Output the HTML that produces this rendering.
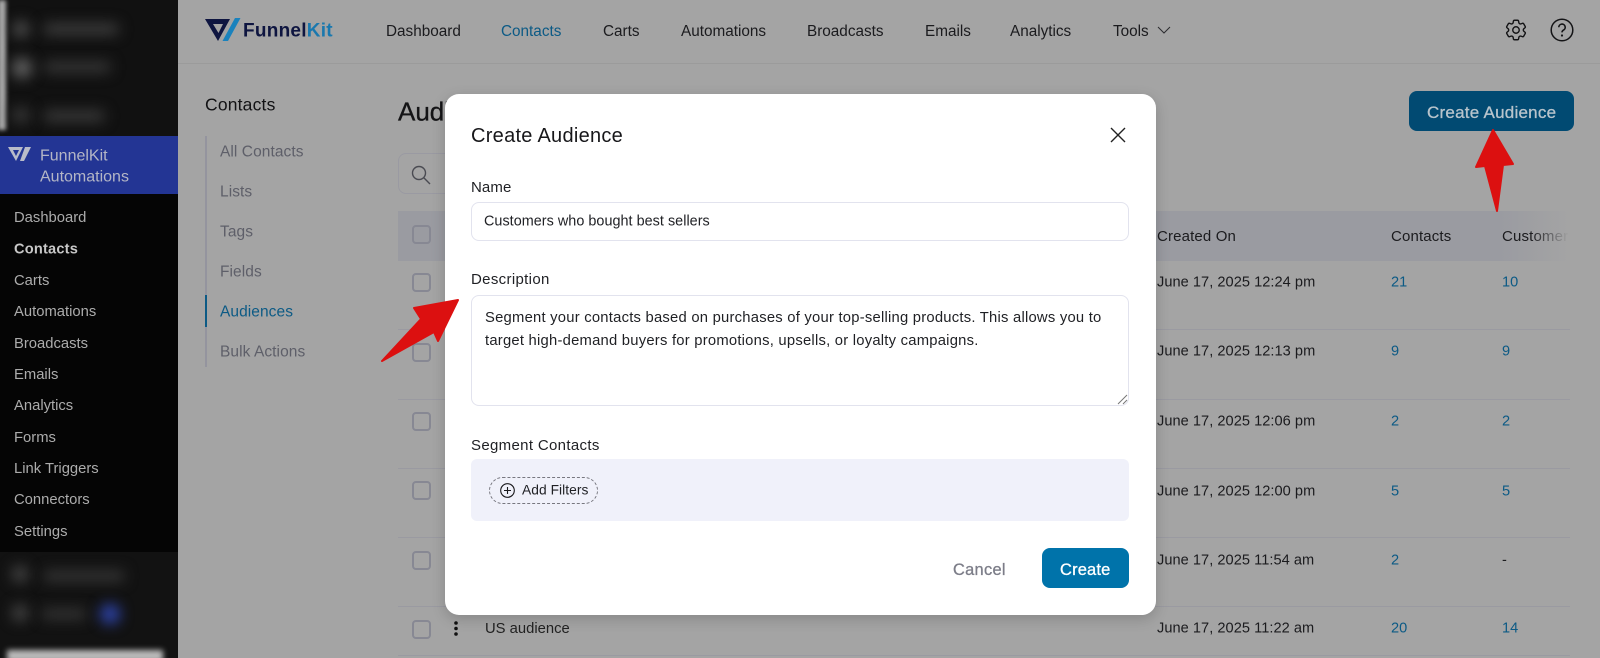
<!DOCTYPE html>
<html><head><meta charset="utf-8"><style>
html,body{margin:0;padding:0;width:1600px;height:658px;overflow:hidden;background:#a4a4a4;font-family:"Liberation Sans",sans-serif}
#p{position:relative;width:1600px;height:658px;overflow:hidden}
.a{position:absolute}
.t{position:absolute;white-space:nowrap;transform:translateY(-50%);line-height:1.2;font-size:15.3px;color:#1b1b1e}
.s{color:#acacac;font-size:14.8px}
.n{color:#5e5f69;font-size:15.5px;letter-spacing:.07px}
.l{color:#0c5a85;font-size:14.6px}
.d{font-size:14.6px;letter-spacing:.04px}
.h{font-size:15px;letter-spacing:.15px}
.m{color:#1f2024;font-size:15px;letter-spacing:.33px}
.w{-webkit-text-stroke:.3px currentColor}
.cb{position:absolute;left:412px;width:15px;height:15px;border:2px solid #878893;border-radius:4px}
.hr{position:absolute;left:398px;width:1172px;height:1px;background:#9a9aa1}
.b{position:absolute;filter:blur(7px)}
</style></head><body><div id="p">

<!-- sidebar -->
<div class="a" style="left:0;top:0;width:178px;height:136px;background:#111;overflow:hidden">
<div class="b" style="left:-2px;top:0;width:8px;height:130px;background:#aaa;filter:blur(2px)"></div>
<div class="b" style="left:13px;top:21px;width:16px;height:16px;border-radius:50%;background:#555"></div>
<div class="b" style="left:44px;top:24px;width:74px;height:10px;background:#444"></div>
<div class="b" style="left:12px;top:58px;width:20px;height:20px;border-radius:50%;background:#666"></div>
<div class="b" style="left:44px;top:62px;width:66px;height:10px;background:#3c3c3c"></div>
<div class="b" style="left:13px;top:108px;width:16px;height:14px;background:#3a3a3a"></div>
<div class="b" style="left:44px;top:111px;width:60px;height:10px;background:#404040"></div>
</div>
<div class="a" style="left:0;top:136px;width:178px;height:58px;background:#233594"></div>
<div class="a" style="left:0;top:194px;width:178px;height:358px;background:#050505"></div>
<div class="a" style="left:0;top:552px;width:178px;height:106px;background:#121212;overflow:hidden">
<div class="b" style="left:12px;top:14px;width:16px;height:16px;border-radius:50%;background:#4a4a4a"></div>
<div class="b" style="left:44px;top:19px;width:80px;height:10px;background:#3a3a3a"></div>
<div class="b" style="left:12px;top:53px;width:16px;height:16px;border-radius:50%;background:#4a4a4a"></div>
<div class="b" style="left:42px;top:57px;width:44px;height:10px;background:#383838"></div>
<div class="b" style="left:100px;top:52px;width:20px;height:20px;border-radius:50%;background:#2f46b0"></div>
<div class="a" style="left:7px;top:98px;width:156px;height:12px;background:#bbb;filter:blur(3px)"></div>
</div>
<svg class="a" style="left:8px;top:147px" width="24" height="15" viewBox="0 0 24 15"><path d="M0 0H15L8 14Z M5 3L8 9L11 3Z" fill="#b9bcc9" fill-rule="evenodd"/><path d="M17 0H23L16 14H12Z" fill="#b9bcc9"/></svg>
<div class="t" style="left:40px;top:156px;color:#b4b6c6;font-size:16px">FunnelKit</div>
<div class="t" style="left:40px;top:177px;color:#b4b6c6;font-size:16px">Automations</div>
<div class="t s" style="left:14px;top:219px">Dashboard</div>
<div class="t" style="left:14px;top:250px;color:#c8c8c8;font-weight:bold;font-size:14.6px;letter-spacing:.2px">Contacts</div>
<div class="t s" style="left:14px;top:282px">Carts</div>
<div class="t s" style="left:14px;top:313px">Automations</div>
<div class="t s" style="left:14px;top:345px">Broadcasts</div>
<div class="t s" style="left:14px;top:376px">Emails</div>
<div class="t s" style="left:14px;top:407px">Analytics</div>
<div class="t s" style="left:14px;top:439px">Forms</div>
<div class="t s" style="left:14px;top:470px">Link Triggers</div>
<div class="t s" style="left:14px;top:501px">Connectors</div>
<div class="t s" style="left:14px;top:533px">Settings</div>

<!-- header -->
<div class="a" style="left:178px;top:63px;width:1422px;height:1px;background:#9b9b9b"></div>
<svg class="a" style="left:205px;top:18px" width="36" height="24" viewBox="0 0 36 24"><path d="M0 1H25L13 23Z M8 6H18L13.500 15Z" fill="#0e1540" fill-rule="evenodd"/><path d="M30 0H35.500L23 23H17.500Z" fill="#1a82bd"/></svg>
<div class="t" style="left:243px;top:32px;font-size:19px;font-weight:bold;letter-spacing:.25px;color:#0e1540">Funnel<span style="color:#1a78ae">Kit</span></div>
<div class="t" style="left:386px;top:32px">Dashboard</div>
<div class="t" style="left:501px;top:32px;color:#0c5a85">Contacts</div>
<div class="t" style="left:603px;top:32px">Carts</div>
<div class="t" style="left:681px;top:32px">Automations</div>
<div class="t" style="left:807px;top:32px">Broadcasts</div>
<div class="t" style="left:925px;top:32px">Emails</div>
<div class="t" style="left:1010px;top:32px">Analytics</div>
<div class="t" style="left:1113px;top:32px">Tools</div>
<svg class="a" style="left:1157px;top:25px" width="14" height="10" viewBox="0 0 14 10"><path d="M1 2L7 8L13 2" fill="none" stroke="#2b2b2e" stroke-width="1"/></svg>
<svg class="a" style="left:1503px;top:17px" width="26" height="26" viewBox="0 0 24 24" fill="none" stroke="#141416" stroke-width="1.300" stroke-linejoin="round"><path d="M9.594 3.94c.09-.542.56-.94 1.11-.94h2.593c.55 0 1.02.398 1.11.94l.213 1.281c.063.374.313.686.645.87.074.04.147.083.22.127.324.196.72.257 1.075.124l1.217-.456a1.125 1.125 0 011.37.49l1.296 2.247a1.125 1.125 0 01-.26 1.431l-1.003.827c-.293.24-.438.613-.431.992a6.759 6.759 0 010 .255c-.007.378.138.75.43.99l1.005.828c.424.35.534.954.26 1.43l-1.298 2.247a1.125 1.125 0 01-1.369.491l-1.217-.456c-.355-.133-.75-.072-1.076.124a6.57 6.57 0 01-.22.128c-.331.183-.581.495-.644.869l-.213 1.28c-.09.543-.56.941-1.11.941h-2.594c-.55 0-1.02-.398-1.11-.94l-.213-1.281c-.062-.374-.312-.686-.644-.87a6.52 6.52 0 01-.22-.127c-.325-.196-.72-.257-1.076-.124l-1.217.456a1.125 1.125 0 01-1.369-.49l-1.297-2.247a1.125 1.125 0 01.26-1.431l1.004-.827c.292-.24.437-.613.43-.992a6.932 6.932 0 010-.255c.007-.378-.138-.75-.43-.99l-1.004-.828a1.125 1.125 0 01-.26-1.43l1.297-2.247a1.125 1.125 0 011.37-.491l1.216.456c.356.133.751.072 1.076-.124.072-.044.146-.087.22-.128.332-.183.582-.495.644-.869l.214-1.281z"/><path d="M15 12a3 3 0 11-6 0 3 3 0 016 0z"/></svg>
<svg class="a" style="left:1550px;top:18px" width="24" height="24" viewBox="0 0 24 24" fill="none"><circle cx="12" cy="12" r="10.800" stroke="#141416" stroke-width="1.500"/><path d="M8.800 9.300a3.200 3.200 0 1 1 4.700 2.800c-1 .6-1.500 1.200-1.500 2.300" stroke="#141416" stroke-width="1.600"/><circle cx="12" cy="17.500" r="1.100" fill="#141416"/></svg>

<!-- secondary nav -->
<div class="t" style="left:205px;top:105px;font-size:17.500px;letter-spacing:.18px;color:#121214">Contacts</div>
<div class="a" style="left:205px;top:136px;width:2px;height:231px;background:#94949e"></div>
<div class="a" style="left:205px;top:295px;width:2px;height:32px;background:#0c5a85"></div>
<div class="t n" style="left:220px;top:153px">All Contacts</div>
<div class="t n" style="left:220px;top:193px">Lists</div>
<div class="t n" style="left:220px;top:233px">Tags</div>
<div class="t n" style="left:220px;top:273px">Fields</div>
<div class="t n" style="left:220px;top:313px;color:#0c5a85">Audiences</div>
<div class="t n" style="left:220px;top:353px">Bulk Actions</div>

<!-- main -->
<div class="t w" style="left:398px;top:112px;font-size:26px;color:#141416">Audiences</div>
<div class="a" style="left:398px;top:153px;width:200px;height:39px;border:1.500px solid #9a9aa2;border-radius:8px"></div>
<svg class="a" style="left:411px;top:165px" width="20" height="20" viewBox="0 0 20 20" fill="none" stroke="#4a4b52" stroke-width="1.400"><circle cx="8" cy="8" r="6.500"/><path d="M12.800 12.800L19 19"/></svg>
<div class="a" style="left:398px;top:211px;width:1172px;height:50px;background:linear-gradient(90deg,#9a9ba1 0,#9a9ba1 94%,#a4a4a4 100%)"></div>
<div class="cb" style="top:225px"></div>
<div class="t h" style="left:1157px;top:237px">Created On</div>
<div class="t h" style="left:1391px;top:237px">Contacts</div>
<div class="a" style="left:1502px;top:227px;width:70px;height:20px;overflow:hidden;-webkit-mask-image:linear-gradient(90deg,#000 40%,transparent 95%)"><div class="t h" style="left:0;top:10px">Customers</div></div>

<div class="hr" style="top:329px"></div><div class="hr" style="top:399px"></div><div class="hr" style="top:468px"></div><div class="hr" style="top:537px"></div><div class="hr" style="top:606px"></div><div class="hr" style="top:655px"></div>
<div class="cb" style="top:273px"></div><div class="cb" style="top:343px"></div><div class="cb" style="top:412px"></div><div class="cb" style="top:481px"></div><div class="cb" style="top:551px"></div><div class="cb" style="top:620px"></div>

<div class="t d" style="left:1157px;top:283px">June 17, 2025 12:24 pm</div>
<div class="t d" style="left:1157px;top:352px">June 17, 2025 12:13 pm</div>
<div class="t d" style="left:1157px;top:422px">June 17, 2025 12:06 pm</div>
<div class="t d" style="left:1157px;top:492px">June 17, 2025 12:00 pm</div>
<div class="t d" style="left:1157px;top:561px">June 17, 2025 11:54 am</div>
<div class="t d" style="left:1157px;top:629px">June 17, 2025 11:22 am</div>
<div class="t l" style="left:1391px;top:283px">21</div><div class="t l" style="left:1502px;top:283px">10</div>
<div class="t l" style="left:1391px;top:352px">9</div><div class="t l" style="left:1502px;top:352px">9</div>
<div class="t l" style="left:1391px;top:422px">2</div><div class="t l" style="left:1502px;top:422px">2</div>
<div class="t l" style="left:1391px;top:492px">5</div><div class="t l" style="left:1502px;top:492px">5</div>
<div class="t l" style="left:1391px;top:561px">2</div><div class="t d" style="left:1502px;top:561px">-</div>
<div class="t l" style="left:1391px;top:629px">20</div><div class="t l" style="left:1502px;top:629px">14</div>
<div class="t" style="left:485px;top:630px;font-size:14.800px;color:#222">US audience</div>
<svg class="a" style="left:453px;top:620px" width="6" height="17" viewBox="0 0 6 17"><circle cx="3" cy="3" r="1.800" fill="#111"/><circle cx="3" cy="8.500" r="1.800" fill="#111"/><circle cx="3" cy="14" r="1.800" fill="#111"/></svg>

<!-- create audience button -->
<div class="a" style="left:1409px;top:91px;width:165px;height:40px;background:#014a72;border-radius:8px"></div>
<div class="t w" style="left:1427px;top:113px;font-size:17px;letter-spacing:.24px;color:#b8c4cc">Create Audience</div>

<!-- modal -->
<div class="a" style="left:445px;top:94px;width:711px;height:521px;background:#fff;border-radius:14px;box-shadow:0 4px 14px rgba(0,0,0,.18)"></div>
<div class="t" style="left:471px;top:136px;font-size:20px;letter-spacing:.28px;color:#17171a">Create Audience</div>
<svg class="a" style="left:1110px;top:127px" width="16" height="16" viewBox="0 0 16 16"><path d="M1 1L15 15M15 1L1 15" stroke="#222" stroke-width="1.400"/></svg>
<div class="t m" style="left:471px;top:188px;letter-spacing:.1px">Name</div>
<div class="a" style="left:471px;top:202px;width:656px;height:37px;border:1px solid #e2e3ee;border-radius:8px"></div>
<div class="t m" style="left:484px;top:222px;font-size:14.400px;letter-spacing:.03px">Customers who bought best sellers</div>
<div class="t m" style="left:471px;top:280px">Description</div>
<div class="a" style="left:471px;top:295px;width:656px;height:109px;border:1px solid #e2e3ee;border-radius:8px"></div>
<div class="t m" style="left:485px;top:318.500px;font-size:14.800px;letter-spacing:.23px">Segment your contacts based on purchases of your top-selling products. This allows you to</div>
<div class="t m" style="left:485px;top:341.500px;font-size:14.800px;letter-spacing:.23px">target high-demand buyers for promotions, upsells, or loyalty campaigns.</div>
<svg class="a" style="left:1117px;top:394px" width="11" height="11" viewBox="0 0 11 11"><path d="M1 10L10 1M6 10L10 6" stroke="#777" stroke-width="1"/></svg>
<div class="t m" style="left:471px;top:445.500px">Segment Contacts</div>
<div class="a" style="left:471px;top:459px;width:658px;height:62px;background:#f0f1fa;border-radius:6px"></div>
<div class="a" style="left:489px;top:477px;width:107px;height:25px;border:1px dashed #77777f;border-radius:14px"></div>
<svg class="a" style="left:500px;top:483px" width="15" height="15" viewBox="0 0 15 15" fill="none" stroke="#1a1a1d" stroke-width="1.100"><circle cx="7.500" cy="7.500" r="6.800"/><path d="M7.500 4V11M4 7.500H11"/></svg>
<div class="t m" style="left:522px;top:491px;font-size:13.800px;letter-spacing:.05px">Add Filters</div>
<div class="t w" style="left:953px;top:570.500px;font-size:16.400px;letter-spacing:.3px;color:#7c7d88">Cancel</div>
<div class="a" style="left:1042px;top:548px;width:87px;height:40px;background:#0073aa;border-radius:8px"></div>
<div class="t w" style="left:1060px;top:570.500px;font-size:16.500px;letter-spacing:.15px;color:#fff">Create</div>

<!-- arrows -->
<svg class="a" style="left:0;top:0" width="1600" height="658" viewBox="0 0 1600 658"><path d="M1493 130L1513 164L1503 165L1497 211L1485 166L1476 167Z" fill="#dc1010" stroke="#dc1010" stroke-width="2" stroke-linejoin="round"/><path d="M458 300L414 308L421 319L382 361L434 332L438 341Z" fill="#dc1010" stroke="#dc1010" stroke-width="2" stroke-linejoin="round"/></svg>
</div></body></html>
